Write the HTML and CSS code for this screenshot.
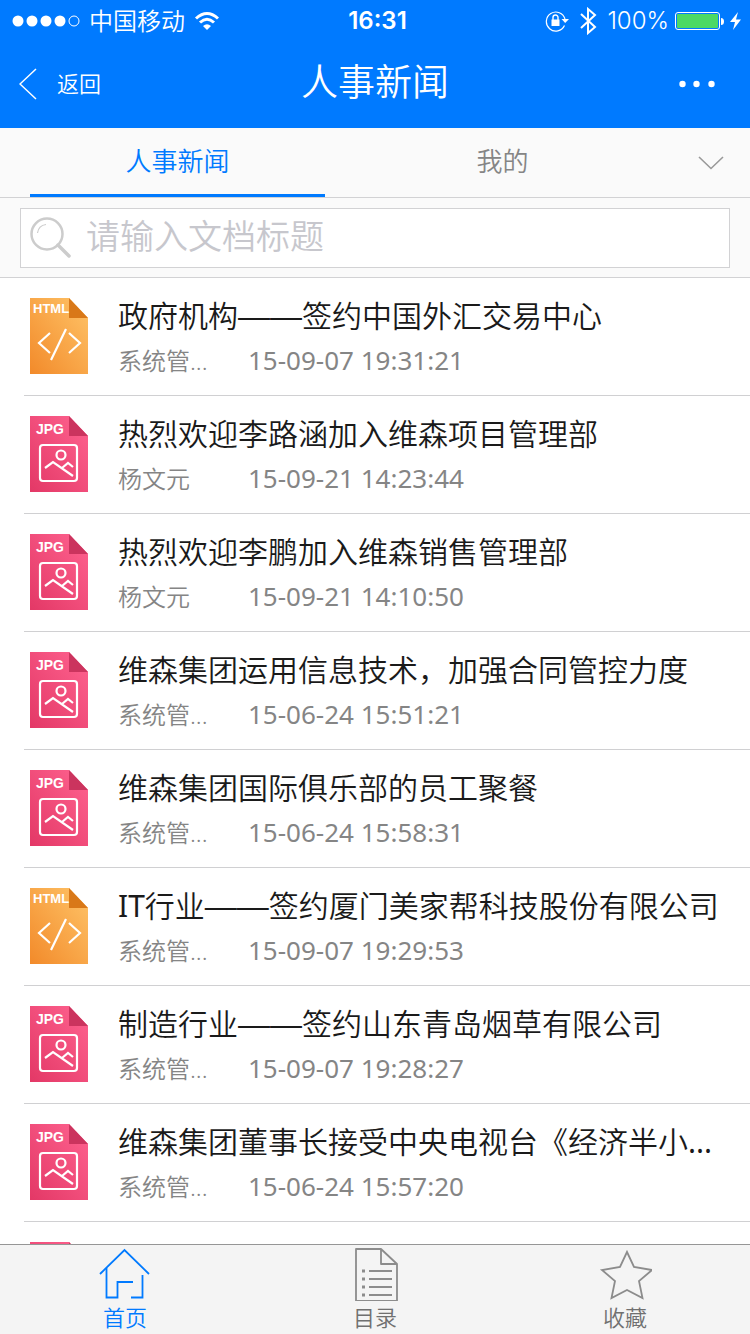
FILE: index.html
```html
<!DOCTYPE html>
<html lang="zh-CN">
<head>
<meta charset="utf-8">
<meta name="viewport" content="width=device-width, initial-scale=1">
<title>人事新闻</title>
<link rel="stylesheet" href="styles.css">
</head>
<body>
<svg class="defs" width="0" height="0" aria-hidden="true">
  <defs>
    <linearGradient id="orange" x1="0" y1="1" x2="1" y2="0"><stop offset="0" stop-color="#f28a2a"/><stop offset="1" stop-color="#ffc468"/></linearGradient>
    <linearGradient id="pink" x1="0" y1="1" x2="1" y2="0"><stop offset="0" stop-color="#e33866"/><stop offset="1" stop-color="#ff6390"/></linearGradient>
  </defs>
  <symbol id="file-html" viewBox="0 0 58 76">
    <path d="M0 0H39L58 20V76H0z" fill="url(#orange)"/>
    <path d="M39 0V20H58z" fill="#d97818"/>
    <path d="M20 35L9 45L20 55M39 35L50 45L39 55M36 31L21 62" fill="none" stroke="#fff" stroke-width="2.200"/>
  </symbol>
  <symbol id="file-jpg" viewBox="0 0 58 76">
    <path d="M0 0H39L58 20V76H0z" fill="url(#pink)"/>
    <path d="M39 0V20H58z" fill="#cb345e"/>
    <g fill="none" stroke="#fff" stroke-width="2.200">
      <rect x="10" y="29" width="37" height="36" rx="3"/>
      <circle cx="31" cy="39" r="4.500"/>
      <path d="M15 52L23 46L43 60M32 52L38 47L43 51"/>
    </g>
  </symbol>
</svg>

<header class="top">
  <div class="status">
    <div class="status-side">
      <svg width="68" height="12" viewBox="0 0 68 12" aria-hidden="true"><g fill="#fff"><circle cx="6" cy="6" r="5.500"/><circle cx="20" cy="6" r="5.500"/><circle cx="34" cy="6" r="5.500"/><circle cx="48" cy="6" r="5.500"/></g><circle cx="62" cy="6" r="5" fill="none" stroke="#fff"/></svg>
      <span class="carrier">中国移动</span>
      <svg width="26" height="20" viewBox="0 0 26 20" aria-hidden="true"><g fill="none" stroke="#fff" stroke-width="3"><path d="M2 7.500Q13-2.500 24 7.500"/><path d="M6 11.500Q13 5 20 11.500"/></g><path d="M9 15Q13 11.500 17 15L13 19z" fill="#fff"/></svg>
    </div>
    <span class="time">16:31</span>
    <div class="status-side end">
      <svg width="24" height="22" viewBox="0 0 24 22" aria-hidden="true"><path d="M19.500 15.500A9.500 9.500 0 1 1 20 9" fill="none" stroke="#fff" stroke-width="1.200"/><path d="M16.500 9H24L20.200 13z" fill="#fff"/><rect x="6.500" y="9.500" width="8" height="6.500" fill="#fff"/><path d="M8 10V7.500a2.500 2.500 0 0 1 5 0V10" fill="none" stroke="#fff" stroke-width="1.400"/></svg>
      <svg class="bluetooth" width="18" height="28" viewBox="0 0 18 28" aria-hidden="true"><path d="M2 7L16 20L9 26V2L16 8L2 21" fill="none" stroke="#fff" stroke-width="2"/></svg>
      <span class="percent">100%</span>
      <svg width="68" height="20" viewBox="0 0 68 20" aria-hidden="true"><rect x="0.500" y="1.500" width="44" height="17" rx="2.500" fill="none" stroke="#fff"/><rect x="2" y="3" width="41" height="14" rx="1" fill="#4cd964"/><path d="M46 7a3 3.500 0 0 1 0 7z" fill="#fff"/><path d="M63 1L55 11H60L58 19L66 8.500H61z" fill="#fff"/></svg>
    </div>
  </div>
  <div class="navbar">
    <button class="back" type="button">
      <svg width="18" height="32" viewBox="0 0 18 32" aria-hidden="true"><path d="M17 1L1 16L17 31" fill="none" stroke="#fff" stroke-width="1.500"/></svg>
      <span>返回</span>
    </button>
    <h1>人事新闻</h1>
    <button class="more" type="button" aria-label="更多">
      <svg width="36" height="8" viewBox="0 0 36 8" fill="#fff" aria-hidden="true"><circle cx="3.500" cy="4" r="3.200"/><circle cx="17.500" cy="4" r="3.200"/><circle cx="32.500" cy="4" r="3.200"/></svg>
    </button>
  </div>
</header>

<nav class="tabs">
  <button class="tab active" type="button">人事新闻</button>
  <button class="tab" type="button">我的</button>
  <button class="expand" type="button" aria-label="展开">
    <svg width="26" height="14" viewBox="0 0 26 14" aria-hidden="true"><path d="M1 1L13 12.500L25 1" fill="none" stroke="#999" stroke-width="1.600"/></svg>
  </button>
</nav>

<form class="search">
  <label class="search-box">
    <svg width="42" height="42" viewBox="0 0 42 42" fill="none" stroke="#ccc" aria-hidden="true"><circle cx="17" cy="17" r="15.500" stroke-width="2.500"/><path d="M7.500 16Q8.500 8.500 16 7.500" stroke-width="1.200"/><path d="M28 28L39 39" stroke-width="3.500" stroke-linecap="round"/></svg>
    <input type="search" placeholder="请输入文档标题" aria-label="请输入文档标题">
  </label>
</form>

<main class="content">
  <ul class="list">
    <li><a class="item" href="#"><div class="file"><svg width="58" height="76" aria-hidden="true"><use href="#file-html"/></svg><span class="file-type html">HTML</span></div><div class="text"><h2>政府机构<span class="dash">——</span>签约中国外汇交易中心</h2><p><span class="author">系统管...</span><time>15-09-07 19:31:21</time></p></div></a></li>
    <li><a class="item" href="#"><div class="file"><svg width="58" height="76" aria-hidden="true"><use href="#file-jpg"/></svg><span class="file-type">JPG</span></div><div class="text"><h2>热烈欢迎李路涵加入维森项目管理部</h2><p><span class="author">杨文元</span><time>15-09-21 14:23:44</time></p></div></a></li>
    <li><a class="item" href="#"><div class="file"><svg width="58" height="76" aria-hidden="true"><use href="#file-jpg"/></svg><span class="file-type">JPG</span></div><div class="text"><h2>热烈欢迎李鹏加入维森销售管理部</h2><p><span class="author">杨文元</span><time>15-09-21 14:10:50</time></p></div></a></li>
    <li><a class="item" href="#"><div class="file"><svg width="58" height="76" aria-hidden="true"><use href="#file-jpg"/></svg><span class="file-type">JPG</span></div><div class="text"><h2>维森集团运用信息技术，加强合同管控力度</h2><p><span class="author">系统管...</span><time>15-06-24 15:51:21</time></p></div></a></li>
    <li><a class="item" href="#"><div class="file"><svg width="58" height="76" aria-hidden="true"><use href="#file-jpg"/></svg><span class="file-type">JPG</span></div><div class="text"><h2>维森集团国际俱乐部的员工聚餐</h2><p><span class="author">系统管...</span><time>15-06-24 15:58:31</time></p></div></a></li>
    <li><a class="item" href="#"><div class="file"><svg width="58" height="76" aria-hidden="true"><use href="#file-html"/></svg><span class="file-type html">HTML</span></div><div class="text"><h2><span class="latin">IT</span>行业<span class="dash">——</span>签约厦门美家帮科技股份有限公司</h2><p><span class="author">系统管...</span><time>15-09-07 19:29:53</time></p></div></a></li>
    <li><a class="item" href="#"><div class="file"><svg width="58" height="76" aria-hidden="true"><use href="#file-jpg"/></svg><span class="file-type">JPG</span></div><div class="text"><h2>制造行业<span class="dash">——</span>签约山东青岛烟草有限公司</h2><p><span class="author">系统管...</span><time>15-09-07 19:28:27</time></p></div></a></li>
    <li><a class="item" href="#"><div class="file"><svg width="58" height="76" aria-hidden="true"><use href="#file-jpg"/></svg><span class="file-type">JPG</span></div><div class="text"><h2>维森集团董事长接受中央电视台《经济半小<span class="latin">...</span></h2><p><span class="author">系统管...</span><time>15-06-24 15:57:20</time></p></div></a></li>
    <li><a class="item" href="#" aria-label="图片"><div class="file"><svg width="58" height="76" aria-hidden="true"><use href="#file-jpg"/></svg></div></a></li>
  </ul>
</main>

<nav class="bottom">
  <button class="dock active" type="button">
    <svg width="54" height="56" viewBox="0 0 54 56" aria-hidden="true"><g fill="none" stroke="currentColor" stroke-width="1.800"><path d="M2 29L26.500 5L51 29"/><path d="M8.500 23V52.500H19.500V37H35M44.500 30V52.500H33"/></g></svg>
    <span>首页</span>
  </button>
  <button class="dock" type="button">
    <svg width="54" height="56" viewBox="0 0 54 56" aria-hidden="true"><g fill="none" stroke="#8c8c8c" stroke-width="1.800" stroke-linejoin="round"><path d="M8 4H33L49 19V56H8zM33 4V19H49"/><path d="M21 26H44M21 34H44M21 42H44M21 50H44"/><path d="M14 26h3M14 34h3M14 42h3M14 50h3" stroke-width="3"/></g></svg>
    <span>目录</span>
  </button>
  <button class="dock" type="button">
    <svg width="54" height="56" viewBox="0 0 54 56" aria-hidden="true"><path d="M29 7L36 22L54 25L41 36L44.500 53L29 45L13.500 53L17 36L4 25L22 22z" fill="none" stroke="#8c8c8c" stroke-width="1.800"/></svg>
    <span>收藏</span>
  </button>
</nav>
</body>
</html>
```
FILE: styles.css
```css
* { box-sizing: border-box; }

body {
  display: flex;
  flex-direction: column;
  height: 100vh;
  margin: 0;
  overflow: hidden;
  background: #fff;
  color: #1a1a1a;
  font-family: "Noto Sans", "Noto Sans CJK SC", sans-serif;
  font-weight: 350;
}

button {
  padding: 0;
  border: 0;
  background: none;
  color: inherit;
  font: inherit;
}

svg { flex: none; display: block; }
.defs { position: absolute; }

.top { flex: none; background: #007aff; color: #fff; }

.status {
  display: grid;
  grid-template-columns: 1fr auto 1fr;
  align-items: center;
  height: 40px;
  padding: 2px 7px 0 12px;
  font-size: 24px;
  line-height: 38px;
}
.status-side { display: flex; align-items: center; gap: 9px; }
.status-side.end { justify-content: flex-end; gap: 6px; }
.bluetooth { margin: 0 4px; }
.time, .percent { font-family: Inter, sans-serif; }
.time { font-weight: 600; }
.percent { font-weight: 300; }

.navbar {
  display: grid;
  grid-template-columns: 1fr auto 1fr;
  align-items: center;
  height: 88px;
  padding: 0 19px;
}
.back { display: flex; align-items: center; gap: 20px; justify-self: start; font-size: 22px; }
.back span { padding-bottom: 4px; }
.navbar h1 { margin: 0; padding-bottom: 4px; font-size: 37px; font-weight: 350; line-height: 48px; }
.more { justify-self: end; padding-right: 16px; }

.tabs {
  flex: none;
  display: flex;
  gap: 30px;
  height: 70px;
  padding-left: 30px;
  border-bottom: 1px solid #d2d2d4;
  background: #fafafa;
}
.tab {
  flex: 1;
  padding-bottom: 2px;
  border-bottom: 3px solid transparent;
  color: #858585;
  font-size: 26px;
}
.tab.active { border-color: #007aff; color: #007aff; }
.expand { display: grid; place-items: center; width: 100px; margin-left: -30px; padding-left: 22px; }

.search {
  flex: none;
  padding: 10px 20px 9px;
  border-bottom: 1px solid #d2d2d4;
  background: #fafafa;
}
.search-box {
  display: flex;
  align-items: center;
  gap: 14px;
  height: 60px;
  padding: 0 9px;
  border: 1px solid #d2d2d4;
  background: #fff;
}
.search-box input {
  flex: 1;
  min-width: 0;
  height: 56px;
  padding: 0 0 4px;
  border: 0;
  outline: 0;
  background: none;
  appearance: none;
  font: inherit;
  font-size: 34px;
}
.search-box input::placeholder { color: #c7c7cd; opacity: 1; }

.content { flex: 1; min-height: 0; overflow: hidden; }
.list { margin: 0; padding: 0 0 0 24px; list-style: none; }
.list li { border-bottom: 1px solid #d0d0d2; }
.item {
  display: flex;
  gap: 30px;
  padding: 16px 16px 11px 6px;
  color: inherit;
  text-decoration: none;
}
.file { position: relative; flex: none; width: 58px; margin-top: 4px; }
.file-type {
  position: absolute;
  top: 5px;
  left: 6px;
  color: #fff;
  font: 700 14px/16px "Liberation Sans", sans-serif;
}
.file-type.html { top: 3px; left: 3px; font-size: 13px; }
.text { flex: 1; min-width: 0; }
.text h2 {
  margin: 0;
  font-size: 30px;
  font-weight: 350;
  line-height: 44px;
  white-space: nowrap;
}
.latin { font-weight: 400; }
.dash { font-family: "Liberation Sans", sans-serif; font-size: 32px; line-height: 30px; }
.text p {
  display: flex;
  align-items: center;
  gap: 34px;
  margin: 0;
  color: #858585;
  line-height: 46px;
}
.author { width: 96px; font-size: 24px; white-space: nowrap; }
.text time { margin-bottom: 2px; font-size: 26px; font-weight: 400; line-height: 44px; }

.bottom {
  flex: none;
  display: grid;
  grid-template-columns: repeat(3, 1fr);
  height: 90px;
  border-top: 1px solid #969696;
  background: #f4f4f4;
}
.dock {
  display: flex;
  flex-direction: column;
  align-items: center;
  color: #707070;
  font-size: 22px;
  line-height: 32px;
}
.dock.active { color: #007aff; }
```
